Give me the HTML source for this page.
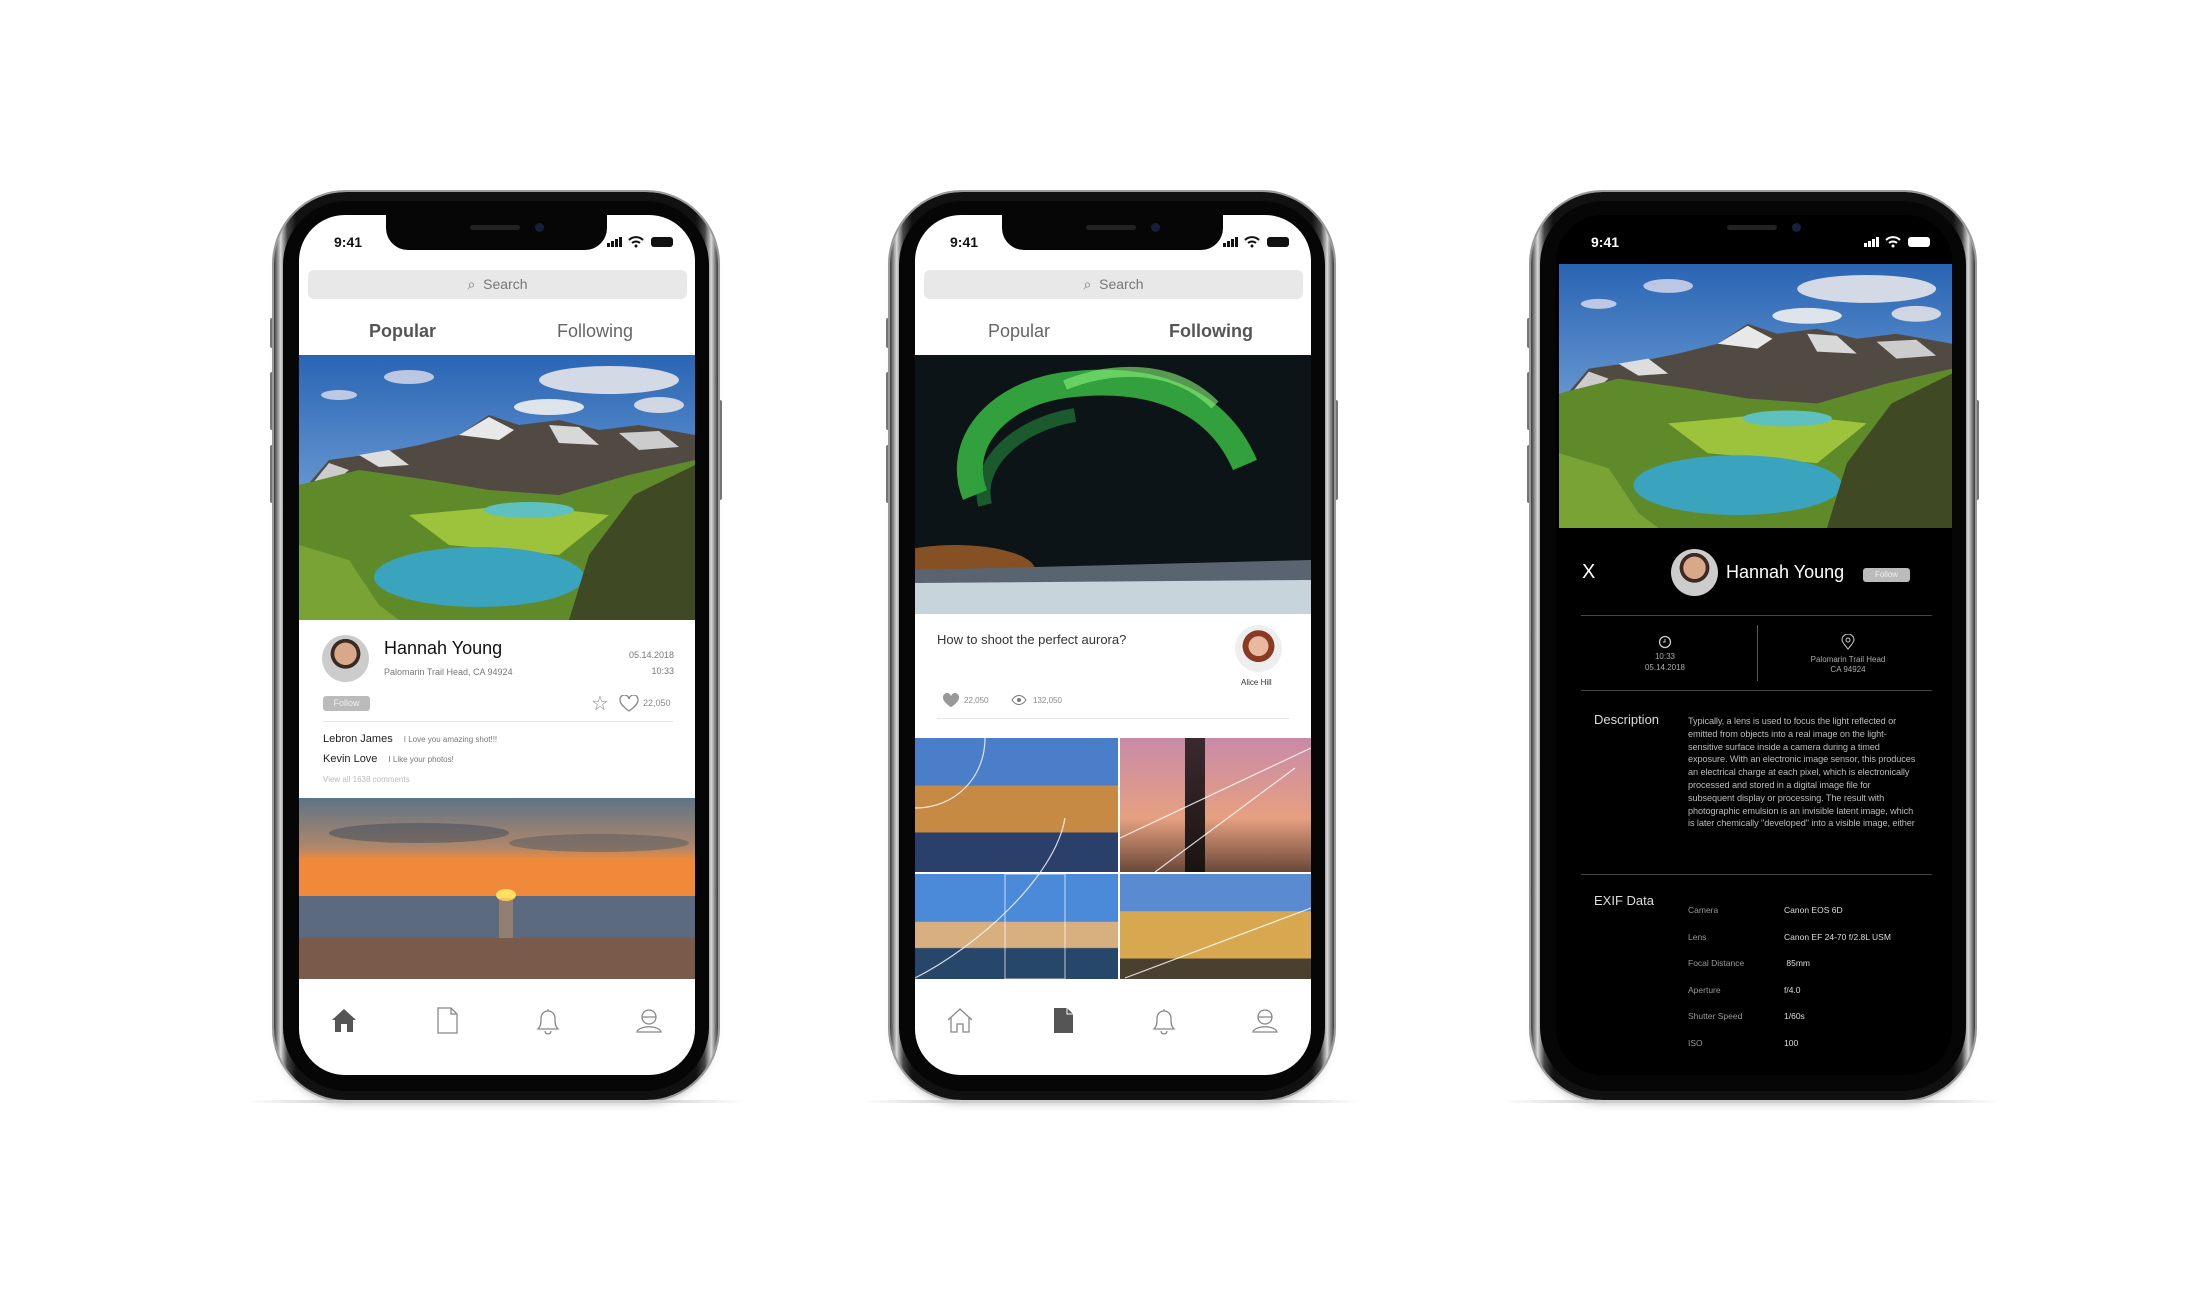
<!DOCTYPE html>
<html><head><meta charset="utf-8"><style>
*{margin:0;padding:0;box-sizing:border-box}
body{width:2192px;height:1302px;background:#fff;position:relative;overflow:hidden;font-family:"Liberation Sans",sans-serif}
.ph{position:absolute;top:0;left:0;width:2192px;height:1302px}
.frame{position:absolute;left:274px;top:192px;width:444px;height:908px;border-radius:72px;background:linear-gradient(90deg,#3a3a3a 0%,#d8d8d8 1.5%,#444 3%,#111 5%,#111 95%,#444 97%,#d8d8d8 98.5%,#3a3a3a 100%);box-shadow:0 0 0 2px #9a9a9a,0 8px 10px -6px rgba(0,0,0,.35)}
.frame:after{content:"";position:absolute;left:9px;top:9px;right:9px;bottom:9px;border-radius:64px;background:#060606}
.btn{position:absolute;width:5px;background:#777;border-radius:2px}
.screen{position:absolute;left:299px;top:215px;width:396px;height:860px;border-radius:46px;background:#fff;overflow:hidden;z-index:2}
.notch{position:absolute;left:87px;top:0;width:221px;height:35px;background:#060606;border-radius:0 0 22px 22px}
.notch i{position:absolute;left:84px;top:10px;width:50px;height:5px;border-radius:3px;background:#222}
.notch b{position:absolute;left:149px;top:8px;width:9px;height:9px;border-radius:50%;background:#15203a}
.time{position:absolute;left:35px;top:19px;font-size:14px;font-weight:bold;color:#111}
.sig{position:absolute;right:18px;top:19px;width:70px;height:14px}
.abs{position:absolute}
.search{position:absolute;left:9px;top:55px;width:379px;height:29px;border-radius:6px;background:#e8e8e8;color:#777;font-size:14px;text-align:center;line-height:29px}
.tab{position:absolute;top:106px;font-size:18px;color:#666}
.nav{position:absolute;top:790px;width:30px;height:30px}
.shadow{position:absolute;top:1100px;height:3px;background:linear-gradient(90deg,transparent,#ccc 20%,#ccc 80%,transparent)}
</style></head><body>

<svg width="0" height="0" style="position:absolute">
<defs>
<linearGradient id="sky" x1="0" y1="0" x2="0" y2="1"><stop offset="0" stop-color="#2a65b4"/><stop offset="1" stop-color="#9cc4ea"/></linearGradient>
<symbol id="mtn" viewBox="0 0 396 265" preserveAspectRatio="none">
<rect width="396" height="265" fill="url(#sky)"/>
<ellipse cx="310" cy="25" rx="70" ry="14" fill="#e6e6ea" opacity=".9"/><ellipse cx="250" cy="52" rx="35" ry="8" fill="#f0f0f0" opacity=".9"/><ellipse cx="110" cy="22" rx="25" ry="7" fill="#dde" opacity=".8"/><ellipse cx="360" cy="50" rx="25" ry="8" fill="#e0e0e6" opacity=".9"/><ellipse cx="40" cy="40" rx="18" ry="5" fill="#dde" opacity=".8"/>
<polygon points="0,140 30,105 80,98 120,90 160,80 190,60 220,70 260,65 300,75 340,70 396,80 396,200 0,200" fill="#514a42"/>
<polygon points="60,100 90,95 110,110 80,112" fill="#ddd"/><polygon points="160,80 190,62 215,75 200,85" fill="#e8e8e8"/><polygon points="250,70 280,72 300,90 260,88" fill="#d8d8d8"/><polygon points="320,78 360,76 380,92 340,95" fill="#ccc"/><polygon points="0,145 30,108 50,115 20,140" fill="#ccc"/>
<polygon points="0,130 60,115 130,125 190,135 260,140 330,120 396,105 396,265 0,265" fill="#5f8a2a"/>
<polygon points="110,160 220,150 310,160 260,200 150,190" fill="#9cc33b"/>
<ellipse cx="230" cy="155" rx="45" ry="8" fill="#5fc0c0"/>
<ellipse cx="180" cy="222" rx="105" ry="30" fill="#3aa3bd"/>
<polygon points="270,265 290,200 335,140 396,110 396,265" fill="#3f4a24"/>
<polygon points="0,265 0,190 50,205 80,250 100,265" fill="#7aa335"/>
</symbol>
<symbol id="aur" viewBox="0 0 396 259" preserveAspectRatio="none">
<rect width="396" height="259" fill="#0c1418"/>
<path d="M60,140 C40,90 80,40 150,30 C230,20 300,40 330,110" stroke="#3fd04a" stroke-width="26" fill="none" opacity=".75"/>
<path d="M150,30 C200,10 260,10 300,50" stroke="#8af07a" stroke-width="10" fill="none" opacity=".6"/>
<path d="M70,150 C60,110 100,70 160,60" stroke="#2aa040" stroke-width="14" fill="none" opacity=".5"/>
<ellipse cx="40" cy="215" rx="80" ry="25" fill="#b86a2a" opacity=".7"/>
<rect y="215" width="396" height="44" fill="#c8d4dc"/>
<polygon points="0,215 396,205 396,225 0,228" fill="#5a6470"/>
</symbol>
<symbol id="sun" viewBox="0 0 396 181" preserveAspectRatio="none">
<linearGradient id="ss" x1="0" y1="0" x2="0" y2="1"><stop offset="0" stop-color="#5d7487"/><stop offset=".5" stop-color="#b0876a"/><stop offset=".62" stop-color="#f08a3a"/></linearGradient>
<rect width="396" height="100" fill="url(#ss)"/>
<ellipse cx="120" cy="35" rx="90" ry="10" fill="#3d4a58" opacity=".5"/><ellipse cx="300" cy="45" rx="90" ry="9" fill="#4a5560" opacity=".45"/>
<rect y="98" width="396" height="50" fill="#5b6a7e"/>
<ellipse cx="207" cy="97" rx="10" ry="6" fill="#ffe060"/>
<rect x="200" y="100" width="14" height="45" fill="#e8a060" opacity=".4"/>
<rect y="140" width="396" height="41" fill="#7a5a4a"/>
</symbol>
</defs>
</svg>

<!-- PHONE 1 -->
<div class="ph">
<div class="btn" style="left:270px;top:318px;height:30px"></div><div class="btn" style="left:270px;top:372px;height:58px"></div><div class="btn" style="left:270px;top:445px;height:58px"></div><div class="btn" style="left:717px;top:400px;height:100px"></div>
<div class="frame"></div>
<div class="shadow" style="left:245px;width:500px"></div>
<div class="screen">
<div class="notch"><i></i><b></b></div>
<div class="time">9:41</div>
<svg class="sig" viewBox="0 0 70 14"><rect x="0" y="9" width="3" height="4" fill="#111"/><rect x="4" y="7" width="3" height="6" fill="#111"/><rect x="8" y="5" width="3" height="8" fill="#111"/><rect x="12" y="3" width="3" height="10" fill="#111"/><path d="M22,6 a10,10 0 0 1 14,0 M25,9 a6,6 0 0 1 8,0" stroke="#111" stroke-width="2" fill="none"/><circle cx="29" cy="12" r="1.5" fill="#111"/><rect x="44" y="3" width="22" height="10" rx="3" fill="#111"/></svg>
<div class="search">&#x2315;&nbsp; Search</div>
<div class="tab" style="left:70px;font-weight:bold;color:#555">Popular</div>
<div class="tab" style="left:258px">Following</div>
<svg class="abs" style="left:0;top:140px" width="396" height="265"><use href="#mtn"/></svg>
<div class="abs" style="left:23px;top:420px;width:47px;height:47px;border-radius:50%;background:radial-gradient(circle at 50% 40%,#d9a88a 0 30%,#3a2a22 31% 40%,#ccc 41%)"></div>
<div class="abs" style="left:85px;top:423px;font-size:18px;color:#111">Hannah Young</div>
<div class="abs" style="left:85px;top:452px;font-size:9px;color:#777">Palomarin Trail Head, CA 94924</div>
<div class="abs" style="right:21px;top:432px;font-size:9px;color:#777;text-align:right;line-height:16px">05.14.2018<br>10:33</div>
<div class="abs" style="left:24px;top:481px;width:47px;height:15px;border-radius:3px;background:#bbb;color:#eee;font-size:9px;text-align:center;line-height:15px">Follow</div>
<div class="abs" style="left:292px;top:478px;font-size:20px;color:#888;line-height:22px">☆</div>
<svg class="abs" style="left:320px;top:480px" width="20" height="18" viewBox="0 0 20 18"><path d="M10,16 C3,11 1,8 1,5 a4.5,4.5 0 0 1 9,-1 a4.5,4.5 0 0 1 9,1 c0,3 -2,6 -9,11z" stroke="#888" stroke-width="1.3" fill="none"/></svg>
<div class="abs" style="left:344px;top:483px;font-size:9px;color:#888">22,050</div>
<div class="abs" style="left:24px;top:506px;width:350px;height:1px;background:#e6e6e6"></div>
<div class="abs" style="left:24px;top:518px;font-size:11px;color:#222">Lebron James <span style="font-size:8px;color:#777;margin-left:8px">I Love you amazing shot!!!</span></div>
<div class="abs" style="left:24px;top:538px;font-size:11px;color:#222">Kevin Love <span style="font-size:8px;color:#777;margin-left:8px">I Like your photos!</span></div>
<div class="abs" style="left:24px;top:560px;font-size:8px;color:#bbb">View all 1638 comments</div>
<svg class="abs" style="left:0;top:583px" width="396" height="181"><use href="#sun"/></svg>
<svg class="nav" style="left:30px" viewBox="0 0 30 30"><path d="M3,15 L15,4 L27,15 L24,15 L24,27 L18,27 L18,19 L12,19 L12,27 L6,27 L6,15z" fill="#555"/></svg>
<svg class="nav" style="left:133px" viewBox="0 0 30 30"><path d="M6,3 H19 L25,9 V28 H6z M19,3 V9 H25" stroke="#888" stroke-width="1.3" fill="none"/></svg>
<svg class="nav" style="left:234px" viewBox="0 0 30 30"><path d="M5,24 C8,21 8,18 8,13 a7,7 0 0 1 14,0 c0,5 0,8 3,11z M12,26 a3,3 0 0 0 6,0 M15,4 v2" stroke="#888" stroke-width="1.3" fill="none"/></svg>
<svg class="nav" style="left:335px" viewBox="0 0 30 30"><circle cx="15" cy="12" r="7" stroke="#888" stroke-width="1.3" fill="none"/><path d="M8,12 H22 M3,27 C5,20 25,20 27,27z" stroke="#888" stroke-width="1.3" fill="none"/></svg>
</div>
</div>

<!-- PHONE 2 -->
<div class="ph" style="left:616px">
<div class="btn" style="left:270px;top:318px;height:30px"></div><div class="btn" style="left:270px;top:372px;height:58px"></div><div class="btn" style="left:270px;top:445px;height:58px"></div><div class="btn" style="left:717px;top:400px;height:100px"></div>
<div class="frame"></div>
<div class="shadow" style="left:245px;width:500px"></div>
<div class="screen">
<div class="notch"><i></i><b></b></div>
<div class="time">9:41</div>
<svg class="sig" viewBox="0 0 70 14"><rect x="0" y="9" width="3" height="4" fill="#111"/><rect x="4" y="7" width="3" height="6" fill="#111"/><rect x="8" y="5" width="3" height="8" fill="#111"/><rect x="12" y="3" width="3" height="10" fill="#111"/><path d="M22,6 a10,10 0 0 1 14,0 M25,9 a6,6 0 0 1 8,0" stroke="#111" stroke-width="2" fill="none"/><circle cx="29" cy="12" r="1.5" fill="#111"/><rect x="44" y="3" width="22" height="10" rx="3" fill="#111"/></svg>
<div class="search">&#x2315;&nbsp; Search</div>
<div class="tab" style="left:73px">Popular</div>
<div class="tab" style="left:254px;font-weight:bold;color:#555">Following</div>
<svg class="abs" style="left:0;top:140px" width="396" height="259"><use href="#aur"/></svg>
<div class="abs" style="left:22px;top:417px;font-size:13px;color:#333">How to shoot the perfect aurora?</div>
<div class="abs" style="left:320px;top:410px;width:47px;height:47px;border-radius:50%;background:radial-gradient(circle at 50% 45%,#e8b8a0 0 28%,#8a3a22 29% 45%,#eee 46%)"></div>
<div class="abs" style="left:326px;top:463px;font-size:8px;color:#333">Alice Hill</div>
<svg class="abs" style="left:27px;top:478px" width="18" height="16" viewBox="0 0 20 18"><path d="M10,16 C3,11 1,8 1,5 a4.5,4.5 0 0 1 9,-1 a4.5,4.5 0 0 1 9,1 c0,3 -2,6 -9,11z" fill="#999"/></svg>
<div class="abs" style="left:49px;top:481px;font-size:8px;color:#888">22,050</div>
<svg class="abs" style="left:96px;top:480px" width="16" height="10" viewBox="0 0 16 10"><path d="M1,5 C5,-1 11,-1 15,5 C11,11 5,11 1,5z" stroke="#777" fill="none"/><circle cx="8" cy="5" r="2" fill="#777"/></svg>
<div class="abs" style="left:118px;top:481px;font-size:8px;color:#888">132,050</div>
<div class="abs" style="left:22px;top:503px;width:352px;height:1px;background:#e6e6e6"></div>
<div class="abs" style="left:0;top:523px;width:203px;height:134px;background:linear-gradient(#4a7ec8 0 35%,#c78a45 36% 70%,#2a3f6a 71%)"></div>
<div class="abs" style="left:205px;top:523px;width:191px;height:134px;background:linear-gradient(#c88aa8,#e6a080 60%,#6a4838)"></div>
<div class="abs" style="left:270px;top:523px;width:20px;height:134px;background:linear-gradient(#3a2a30,#1a1410)"></div>
<div class="abs" style="left:0;top:659px;width:203px;height:105px;background:linear-gradient(#4a8ad8 0 45%,#d8b080 46% 70%,#26466a 71%)"></div>
<div class="abs" style="left:205px;top:659px;width:191px;height:105px;background:linear-gradient(#5a8ad0 0 35%,#d8a850 36% 80%,#4a4030 81%)"></div>
<svg class="abs" style="left:0;top:523px" width="396" height="241"><path d="M0,70 C40,70 70,40 70,0 M205,100 L396,10 M240,134 L380,30 M0,240 C60,210 140,140 150,80 M210,240 L396,170" stroke="#fff" stroke-width="1.2" fill="none" opacity=".8"/><rect x="90" y="136" width="60" height="105" stroke="#fff" fill="none" opacity=".7"/></svg>
<svg class="nav" style="left:30px" viewBox="0 0 30 30"><path d="M3,15 L15,4 L27,15 M6,13 V27 H12 V19 H18 V27 H24 V13" stroke="#888" stroke-width="1.3" fill="none"/></svg>
<svg class="nav" style="left:133px" viewBox="0 0 30 30"><path d="M6,3 H19 L25,9 V28 H6z" fill="#555"/><path d="M19,3 V9 H25" stroke="#fff" fill="none"/></svg>
<svg class="nav" style="left:234px" viewBox="0 0 30 30"><path d="M5,24 C8,21 8,18 8,13 a7,7 0 0 1 14,0 c0,5 0,8 3,11z M12,26 a3,3 0 0 0 6,0 M15,4 v2" stroke="#888" stroke-width="1.3" fill="none"/></svg>
<svg class="nav" style="left:335px" viewBox="0 0 30 30"><circle cx="15" cy="12" r="7" stroke="#888" stroke-width="1.3" fill="none"/><path d="M8,12 H22 M3,27 C5,20 25,20 27,27z" stroke="#888" stroke-width="1.3" fill="none"/></svg>
</div>
</div>

<!-- PHONE 3 -->
<div class="ph" style="left:1257px">
<div class="btn" style="left:270px;top:318px;height:30px"></div><div class="btn" style="left:270px;top:372px;height:58px"></div><div class="btn" style="left:270px;top:445px;height:58px"></div><div class="btn" style="left:717px;top:400px;height:100px"></div>
<div class="frame"></div>
<div class="shadow" style="left:245px;width:500px"></div>
<div class="screen" style="background:#000;color:#fff">
<div class="notch" style="background:#000"><i></i><b></b></div>
<div class="time" style="color:#fff">9:41</div>
<svg class="sig" viewBox="0 0 70 14"><rect x="0" y="9" width="3" height="4" fill="#fff"/><rect x="4" y="7" width="3" height="6" fill="#fff"/><rect x="8" y="5" width="3" height="8" fill="#fff"/><rect x="12" y="3" width="3" height="10" fill="#fff"/><path d="M22,6 a10,10 0 0 1 14,0 M25,9 a6,6 0 0 1 8,0" stroke="#fff" stroke-width="2" fill="none"/><circle cx="29" cy="12" r="1.5" fill="#fff"/><rect x="44" y="3" width="22" height="10" rx="3" fill="#fff"/></svg>
<svg class="abs" style="left:3px;top:49px" width="393" height="264"><use href="#mtn"/></svg>
<div class="abs" style="left:26px;top:346px;font-size:20px">X</div>
<div class="abs" style="left:115px;top:334px;width:47px;height:47px;border-radius:50%;background:radial-gradient(circle at 50% 40%,#d9a88a 0 30%,#3a2a22 31% 40%,#ccc 41%)"></div>
<div class="abs" style="left:170px;top:347px;font-size:18px">Hannah Young</div>
<div class="abs" style="left:307px;top:353px;width:47px;height:14px;border-radius:3px;background:#bbb;color:#eee;font-size:8px;text-align:center;line-height:14px">Follow</div>
<div class="abs" style="left:25px;top:400px;width:351px;height:1px;background:#444"></div>
<div class="abs" style="left:201px;top:410px;width:1px;height:56px;background:#555"></div>
<svg class="abs" style="left:102px;top:420px" width="14" height="14" viewBox="0 0 14 14"><circle cx="7" cy="7" r="5.5" stroke="#ccc" stroke-width="1.3" fill="none"/><path d="M7,4 V7 H5" stroke="#ccc" fill="none"/></svg>
<div class="abs" style="left:59px;top:436px;width:100px;font-size:8px;color:#aaa;text-align:center;line-height:11px">10:33<br>05.14.2018</div>
<svg class="abs" style="left:285px;top:419px" width="14" height="16" viewBox="0 0 14 16"><path d="M7,15 C2,9 1,7 1,6 a6,6 0 0 1 12,0 c0,1 -1,3 -6,9z" stroke="#ccc" fill="none"/><circle cx="7" cy="6" r="2" stroke="#ccc" fill="none"/></svg>
<div class="abs" style="left:222px;top:440px;width:140px;font-size:8px;color:#aaa;text-align:center;line-height:10px">Palomarin Trail Head<br>CA 94924</div>
<div class="abs" style="left:25px;top:475px;width:351px;height:1px;background:#444"></div>
<div class="abs" style="left:38px;top:497px;font-size:13px;color:#ddd">Description</div>
<div class="abs" style="left:132px;top:500px;width:228px;font-size:9.2px;color:#bbb;line-height:12.8px;letter-spacing:-.1px">Typically, a lens is used to focus the light reflected or emitted from objects into a real image on the light-sensitive surface inside a camera during a timed exposure. With an electronic image sensor, this produces an electrical charge at each pixel, which is electronically processed and stored in a digital image file for subsequent display or processing. The result with photographic emulsion is an invisible latent image, which is later chemically "developed" into a visible image, either</div>
<div class="abs" style="left:25px;top:659px;width:351px;height:1px;background:#444"></div>
<div class="abs" style="left:38px;top:678px;font-size:13px;color:#ddd">EXIF Data</div>
<div class="abs" style="left:132px;top:682px;font-size:8.5px;color:#999;line-height:26.6px">Camera<br>Lens<br>Focal Distance<br>Aperture<br>Shutter Speed<br>ISO</div>
<div class="abs" style="left:228px;top:682px;font-size:8.5px;color:#ddd;line-height:26.6px">Canon EOS 6D<br>Canon EF 24-70 f/2.8L USM<br>&nbsp;85mm<br>f/4.0<br>1/60s<br>100</div>
</div>
</div>
</body></html>
